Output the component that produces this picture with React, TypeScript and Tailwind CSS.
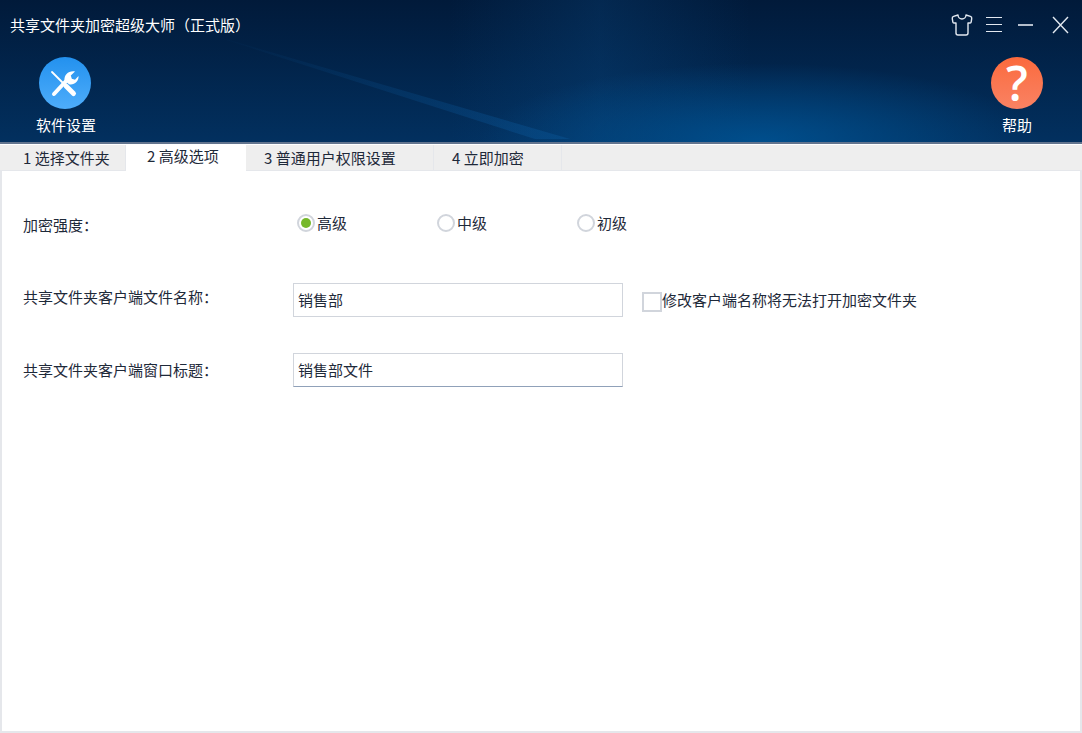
import React from "react";
import { Shirt } from "lucide-react";

const tabs = [
  { label: "1 选择文件夹", width: "w-31", pad: "pl-5.25" },
  { label: "2 高级选项", width: "w-30", pad: "pl-5.25", active: true },
  { label: "3 普通用户权限设置", width: "w-47", pad: "pl-4.5" },
  { label: "4 立即加密", width: "w-32", pad: "pl-4.5" },
];

function HeaderArt() {
  return (
    <svg className="absolute inset-0 h-full w-full" viewBox="0 0 1082 144" preserveAspectRatio="none">
      <defs>
        <radialGradient id="glow" cx="50%" cy="50%" r="50%">
          <stop offset="0%" stopColor="#00508f" stopOpacity="0.95" />
          <stop offset="100%" stopColor="#00508f" stopOpacity="0" />
        </radialGradient>
        <linearGradient id="band" x1="0" x2="1" y1="0" y2="0">
          <stop offset="0%" stopColor="#0a4a85" stopOpacity="0" />
          <stop offset="50%" stopColor="#0a4a85" stopOpacity="0.3" />
          <stop offset="100%" stopColor="#0a4a85" stopOpacity="0" />
        </linearGradient>
        <linearGradient id="streak" x1="0" x2="1" y1="0" y2="0">
          <stop offset="0%" stopColor="#0a5596" stopOpacity="0" />
          <stop offset="100%" stopColor="#0a5596" stopOpacity="0.45" />
        </linearGradient>
      </defs>
      <rect x="450" y="0" width="300" height="144" fill="url(#band)" />
      <rect x="480" y="64" width="560" height="160" fill="url(#glow)" />
      <path d="M200 32 L535 141 L570 141 Z" fill="url(#streak)" />
    </svg>
  );
}

function ToolsIcon() {
  return (
    <svg viewBox="0 0 52 52" className="mr-0.5 h-13 w-13">
      <defs>
        <linearGradient id="toolsBg" x1="0" x2="0" y1="0" y2="1">
          <stop offset="0%" stopColor="#2391ee" />
          <stop offset="100%" stopColor="#4eadfb" />
        </linearGradient>
      </defs>
      <circle cx="26" cy="26" r="26" fill="url(#toolsBg)" />
      <path d="M13 15 L27 29" stroke="#fff" strokeWidth="1.8" strokeLinecap="round" />
      <path d="M27 29 L34.5 36.5" stroke="#fff" strokeWidth="5" strokeLinecap="round" />
      <path d="M15 37 L28 23" stroke="#fff" strokeWidth="4" strokeLinecap="round" />
      <path
        d="M25.5 23.5 C25 18 29.5 13.5 36 14.5 L31.8 18.5 L32.8 21.7 L36 22.7 L39.5 19 C40 24.5 35 28.5 30 27.3 Z"
        fill="#fff"
      />
    </svg>
  );
}

function WindowButtons() {
  return (
    <div className="flex items-center gap-3 pr-3 text-slate-200">
      <Shirt className="-mr-0.5 h-6 w-6" strokeWidth={1.4} />
      <svg viewBox="0 0 20 20" className="h-5 w-5" stroke="currentColor" strokeWidth="1">
        <path d="M2 2.5 H18 M2 9.5 H18 M2 16.5 H18" />
      </svg>
      <svg viewBox="0 0 20 20" className="h-5 w-5" stroke="currentColor" strokeWidth="1.6">
        <path d="M2 10 H17" />
      </svg>
      <svg viewBox="0 0 20 20" className="ml-0.5 h-5 w-5" stroke="currentColor" strokeWidth="1.4">
        <path d="M3 2 L18 18 M18 2 L3 18" />
      </svg>
    </div>
  );
}

function Radio({ label, checked }: { label: string; checked?: boolean }) {
  return (
    <div className="flex w-35 items-center gap-0.5">
      <span className="flex h-4.5 w-4.5 items-center justify-center rounded-full border-2 border-gray-300 bg-white">
        {checked && <span className="h-2.5 w-2.5 rounded-full bg-[#76b82a]" />}
      </span>
      <span>{label}</span>
    </div>
  );
}

export default function App() {
  return (
    <div
      className="flex h-screen w-full flex-col overflow-hidden bg-white text-[15px] text-gray-800"
      style={{ fontFamily: '"Noto Sans CJK SC", "Liberation Sans", sans-serif' }}
    >
      {/* banner */}
      <div className="relative h-36 shrink-0 border-b-2 border-slate-500 bg-gradient-to-b from-[#011a3a] to-[#02305f] text-white">
        <HeaderArt />
        <div className="relative flex h-14 items-center justify-between pb-1.5 pl-2.5">
          <span>共享文件夹加密超级大师（正式版）</span>
          <WindowButtons />
        </div>
        <div className="relative flex items-start justify-between pl-9 pr-9.75 pt-px">
          <div className="flex flex-col items-center gap-1.5">
            <ToolsIcon />
            <span className="leading-5">软件设置</span>
          </div>
          <div className="flex flex-col items-center gap-1.5">
            <span className="flex h-13 w-13 items-center justify-center rounded-full bg-gradient-to-b from-[#fb6a3c] to-[#f98263] font-['Open_Sans'] text-5xl leading-none font-semibold text-white">
              ?
            </span>
            <span className="leading-5">帮助</span>
          </div>
        </div>
      </div>

      {/* tabs */}
      <div className="mt-px flex h-6.5 shrink-0 border-b border-gray-200 bg-[#eeeeee] pl-0.5">
        {tabs.map((tab) => (
          <div
            key={tab.label}
            className={
              tab.active
                ? `${tab.width} ${tab.pad} flex h-6.5 shrink-0 items-start bg-white`
                : `${tab.width} ${tab.pad} flex shrink-0 items-center border-r border-gray-200 pt-0.5`
            }
          >
            {tab.label}
          </div>
        ))}
      </div>

      {/* form */}
      <div className="flex-1 border-x-2 border-b-2 border-gray-200 pl-5.25 pt-10">
        <div className="flex h-6 items-center">
          <span className="w-67.5 pt-1">加密强度：</span>
          <div className="ml-1 flex">
            <Radio label="高级" checked />
            <Radio label="中级" />
            <Radio label="初级" />
          </div>
        </div>

        <div className="mt-12 flex items-center">
          <span className="w-67.5 pb-1.5">共享文件夹客户端文件名称：</span>
          <div className="flex h-8.5 w-82.5 items-center border border-gray-300 pl-1">销售部</div>
          <span className="ml-4.75 mt-1 h-5 w-5 border-2 border-gray-300" />
          <span>修改客户端名称将无法打开加密文件夹</span>
        </div>

        <div className="mt-9 flex items-center">
          <span className="w-67.5">共享文件夹客户端窗口标题：</span>
          <div className="flex h-8.5 w-82.5 items-center border border-gray-300 border-b-slate-400 pl-1">销售部文件</div>
        </div>
      </div>
    </div>
  );
}
